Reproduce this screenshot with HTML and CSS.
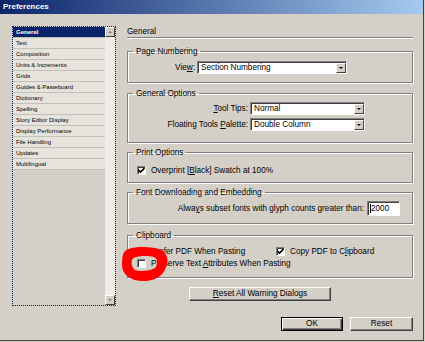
FILE: index.html
```html
<!DOCTYPE html>
<html lang="en">
<head>
  <meta charset="UTF-8">
  <title>Preferences</title>
  <link rel="stylesheet" href="styles.css">
</head>
<body>
  <div class="window">
    <div class="titlebar">Preferences</div>

    <div class="dialog">
      <div class="listbox">
        <ul class="list">
          <li class="selected">General</li>
          <li>Text</li>
          <li>Composition</li>
          <li>Units &amp; Increments</li>
          <li>Grids</li>
          <li>Guides &amp; Pasteboard</li>
          <li>Dictionary</li>
          <li>Spelling</li>
          <li>Story Editor Display</li>
          <li>Display Performance</li>
          <li>File Handling</li>
          <li>Updates</li>
          <li>Multilingual</li>
        </ul>
        <div class="scrollbar">
          <div class="scroll-btn scroll-up"></div>
          <div class="scroll-track"></div>
          <div class="scroll-btn scroll-down"></div>
        </div>
      </div>

      <div class="panel">
        <div class="panel-title">General</div>

        <fieldset class="group g-page">
          <legend>Page Numbering</legend>
          <div class="field">
            <span class="field-label lbl-view">Vie<u>w</u>:</span>
            <div class="select sel-view"><span class="select-value">Section Numbering</span><span class="select-btn"></span></div>
          </div>
        </fieldset>

        <fieldset class="group g-general">
          <legend>General Options</legend>
          <div class="field">
            <span class="field-label lbl-tools"><u>T</u>ool Tips:</span>
            <div class="select sel-tools"><span class="select-value">Normal</span><span class="select-btn"></span></div>
          </div>
          <div class="field">
            <span class="field-label lbl-tools">Floating Tools <u>P</u>alette:</span>
            <div class="select sel-tools"><span class="select-value">Double Column</span><span class="select-btn"></span></div>
          </div>
        </fieldset>

        <fieldset class="group g-print">
          <legend>Print Options</legend>
          <div class="check-row">
            <div class="check-item">
              <span class="check"><svg width="7" height="7" viewBox="0 0 7 7"><path d="M0.5 3 L2.5 5 L6.5 1" stroke="#000" stroke-width="1.6" fill="none"/></svg></span>
              <span>Overprint [<u>B</u>lack] Swatch at 100%</span>
            </div>
          </div>
        </fieldset>

        <fieldset class="group g-font">
          <legend>Font Downloading and Embedding</legend>
          <div class="field field-subset">
            <span class="field-label lbl-subset">Alwa<u>y</u>s subset fonts with glyph counts greater than:</span>
            <div class="text-input"><span class="caret"></span>2000</div>
          </div>
        </fieldset>

        <fieldset class="group g-clip">
          <legend>Clipboard</legend>
          <div class="check-row">
            <div class="check-item wide">
              <span class="check"></span>
              <span>Prefer PDF When Pasting</span>
            </div>
            <div class="check-item">
              <span class="check"><svg width="7" height="7" viewBox="0 0 7 7"><path d="M0.5 3 L2.5 5 L6.5 1" stroke="#000" stroke-width="1.6" fill="none"/></svg></span>
              <span>Copy PDF to C<u>l</u>ipboard</span>
            </div>
          </div>
          <div class="check-row">
            <div class="check-item">
              <span class="check"></span>
              <span>Preserve Text <u>A</u>ttributes When Pasting</span>
            </div>
          </div>
        </fieldset>

        <button class="btn btn-reset-all"><u>R</u>eset All Warning Dialogs</button>

        <div class="actions">
          <button class="btn btn-default">OK</button>
          <button class="btn btn-reset">Reset</button>
        </div>
      </div>
    </div>

    <!-- red marker scribble drawn over the screenshot -->
    <svg class="scribble" width="425" height="342" viewBox="0 0 425 342">
      <path fill="#ff0000" fill-rule="evenodd" d="M123 255 C124 247 140 246 155 248 C165 250 169 257 167 264 C165 272 160 280 146 281 C132 282 122 275 122 265 C122 261 122 258 123 255 Z M132 260 C133 256 146 255 154 257 C158 259 158 265 155 268 C150 271 140 272 135 270 C132 268 131 263 132 260 Z"/>
    </svg>
  </div>
</body>
</html>
```

FILE: styles.css
```css
* {
  box-sizing: border-box;
}

body {
  margin: 0;
  background-color: #D4D0C8;
  font-family: 'Liberation Sans', Arial, sans-serif;
  font-size: 8.2px;
  color: #000;
}

.window {
  position: relative;
  width: 424px;
  height: 341px;
  background-color: #D4D0C8;
  border-right: 1px solid #404040;
  border-bottom: 1px solid #404040;
}

.titlebar {
  height: 14px;
  padding-left: 3px;
  background: linear-gradient(to right, #0A246A, #A6CAF0);
  color: #FFF;
  font-size: 8px;
  font-weight: bold;
  line-height: 14px;
}

.dialog {
  display: flex;
  padding: 12px 0 0 12px;
}

/* category list */
.listbox {
  display: flex;
  width: 104px;
  height: 280px;
  border: 1px dotted #0A246A;
}

.list {
  flex: 1;
  margin: 0;
  padding: 0;
  list-style: none;
}

.list li {
  height: 11px;
  padding-left: 3px;
  border-bottom: 1px solid #C4C0B8;
  background-color: #E6E3DD;
  font-size: 6px;
  line-height: 10px;
  white-space: nowrap;
}

.list li.selected {
  background-color: #0A246A;
  color: #FFF;
  font-weight: bold;
}

.scrollbar {
  display: flex;
  flex-direction: column;
  width: 10px;
  background-color: #EEECE8;
}

.scroll-btn {
  display: flex;
  align-items: center;
  justify-content: center;
  height: 10px;
  background-color: #D4D0C8;
  border: 1px solid;
  border-color: #FFF #404040 #404040 #FFF;
}

.scroll-btn::after {
  content: '';
  border-left: 2px solid transparent;
  border-right: 2px solid transparent;
}

.scroll-up::after {
  border-bottom: 2px solid #808080;
}

.scroll-down::after {
  border-top: 2px solid #808080;
}

.scroll-track {
  flex: 1;
}

/* right panel */
.panel {
  display: flex;
  flex-direction: column;
  width: 286px;
  margin-left: 11px;
}

.panel-title {
  height: 12px;
  line-height: 11px;
  border-bottom: 1px solid #808080;
  box-shadow: 0 1px 0 #FFF;
}

.group {
  min-width: 0;
  margin: 0;
  padding: 0;
  border: 1px solid #808080;
  box-shadow: inset 1px 1px 0 #FFF, 1px 1px 0 #FFF;
}

.group legend {
  height: 11px;
  margin-left: 5px;
  padding: 0 3px;
  line-height: 11px;
}

.g-page {
  margin-top: 8px;
  padding: 4px 0 8px;
}

.g-general {
  margin-top: 5px;
  padding: 3px 0 11px;
}

.g-print {
  margin-top: 4px;
  padding: 6px 0 6px;
}

.g-font {
  margin-top: 4px;
  padding: 3px 0 7px;
}

.g-clip {
  margin-top: 6px;
  padding: 4px 0 8px;
}

.field {
  display: flex;
  align-items: center;
  gap: 2px;
}

.field + .field {
  margin-top: 3px;
}

.field-subset {
  gap: 3px;
}

.field-label {
  flex: none;
  text-align: right;
  white-space: nowrap;
}

.lbl-view {
  width: 67px;
}

.lbl-tools {
  width: 120px;
}

.lbl-subset {
  width: 236px;
}

.select {
  display: flex;
  height: 13px;
  padding: 1px 0 0 1px;
  background-color: #FFF;
  border: 1px solid;
  border-color: #808080 #FFF #FFF #808080;
  box-shadow: inset 1px 1px 0 #404040;
}

.sel-view {
  width: 150px;
}

.sel-tools {
  width: 115px;
}

.select-value {
  flex: 1;
  padding-left: 2px;
  line-height: 10px;
  white-space: nowrap;
}

.select-btn {
  display: flex;
  align-items: center;
  justify-content: center;
  width: 10px;
  background-color: #D4D0C8;
  border: 1px solid;
  border-color: #FFF #404040 #404040 #FFF;
}

.select-btn::after {
  content: '';
  border-left: 2px solid transparent;
  border-right: 2px solid transparent;
  border-top: 2px solid #000;
}

.text-input {
  display: flex;
  align-items: center;
  width: 33px;
  height: 15px;
  padding-left: 2px;
  background-color: #FFF;
  border: 1px solid;
  border-color: #808080 #FFF #FFF #808080;
  box-shadow: inset 1px 1px 0 #404040;
}

.caret {
  width: 1px;
  height: 9px;
  background-color: #000;
}

.check-row {
  display: flex;
  align-items: center;
  height: 12px;
  padding-left: 9px;
}

.check-item {
  display: flex;
  align-items: center;
  gap: 5px;
  white-space: nowrap;
}

.check-item.wide {
  width: 139px;
}

.check {
  display: flex;
  align-items: center;
  justify-content: center;
  flex: none;
  width: 9px;
  height: 9px;
  background-color: #FFF;
  border: 1px solid;
  border-color: #808080 #FFF #FFF #808080;
  box-shadow: inset 1px 1px 0 #404040;
}

/* buttons */
.btn {
  height: 14px;
  padding: 0;
  background-color: #D4D0C8;
  border: 1px solid;
  border-color: #FFF #404040 #404040 #FFF;
  box-shadow: inset -1px -1px 0 #808080;
  font-family: inherit;
  font-size: 8.2px;
  line-height: 12px;
  color: #000;
}

.btn-reset-all {
  width: 142px;
  margin: 9px 0 0 62px;
}

.actions {
  display: flex;
  justify-content: flex-end;
  gap: 7px;
  margin-top: 16px;
}

.btn-default {
  width: 62px;
  border-color: #000;
  box-shadow: inset 1px 1px 0 #FFF, inset -1px -1px 0 #404040, inset -2px -2px 0 #808080;
}

.btn-reset {
  width: 63px;
}

.scribble {
  position: absolute;
  top: 0;
  left: 0;
  pointer-events: none;
}
```
